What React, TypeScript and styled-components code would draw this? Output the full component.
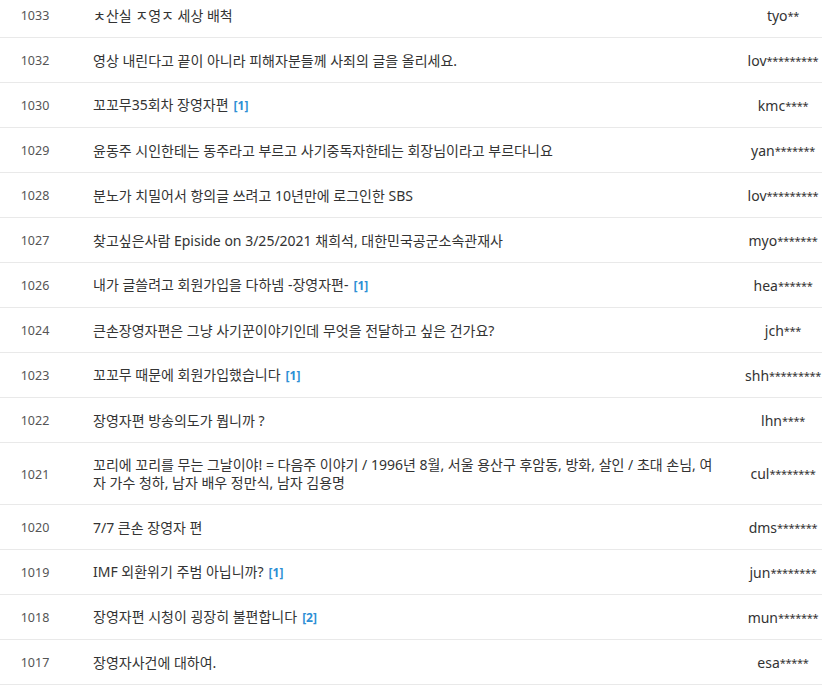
import React from "react";
import styled, { createGlobalStyle } from "styled-components";

// id: 앞 3글자, mask: 가려진 글자 수
const posts = [
  { no: 1033, title: "ㅊ산실 ㅈ영ㅈ 세상 배척", comments: 0, id: "tyo", mask: 2 },
  { no: 1032, title: "영상 내린다고 끝이 아니라 피해자분들께 사죄의 글을 올리세요.", comments: 0, id: "lov", mask: 9 },
  { no: 1030, title: "꼬꼬무35회차 장영자편", comments: 1, id: "kmc", mask: 4 },
  { no: 1029, title: "윤동주 시인한테는 동주라고 부르고 사기중독자한테는 회장님이라고 부르다니요", comments: 0, id: "yan", mask: 7 },
  { no: 1028, title: "분노가 치밀어서 항의글 쓰려고 10년만에 로그인한 SBS", comments: 0, id: "lov", mask: 9 },
  { no: 1027, title: "찾고싶은사람 Episide on 3/25/2021 채희석, 대한민국공군소속관재사", comments: 0, id: "myo", mask: 7 },
  { no: 1026, title: "내가 글쓸려고 회원가입을 다하넴 -장영자편-", comments: 1, id: "hea", mask: 6 },
  { no: 1024, title: "큰손장영자편은 그냥 사기꾼이야기인데 무엇을 전달하고 싶은 건가요?", comments: 0, id: "jch", mask: 3 },
  { no: 1023, title: "꼬꼬무 때문에 회원가입했습니다", comments: 1, id: "shh", mask: 9 },
  { no: 1022, title: "장영자편 방송의도가 뭡니까 ?", comments: 0, id: "lhn", mask: 4 },
  {
    no: 1021,
    title:
      "꼬리에 꼬리를 무는 그날이야! = 다음주 이야기 / 1996년 8월, 서울 용산구 후암동, 방화, 살인 / 초대 손님, 여자 가수 청하, 남자 배우 정만식, 남자 김용명",
    comments: 0,
    id: "cul",
    mask: 8,
  },
  { no: 1020, title: "7/7 큰손 장영자 편", comments: 0, id: "dms", mask: 7 },
  { no: 1019, title: "IMF 외환위기 주범 아닙니까?", comments: 1, id: "jun", mask: 8 },
  { no: 1018, title: "장영자편 시청이 굉장히 불편합니다", comments: 2, id: "mun", mask: 7 },
  { no: 1017, title: "장영자사건에 대하여.", comments: 0, id: "esa", mask: 5 },
];

const Global = createGlobalStyle`
  html, body {
    margin: 0;
    padding: 0;
    background: #ffffff;
    overflow: hidden;
  }
  body {
    font-family: "Noto Sans", "Noto Sans CJK KR", sans-serif;
  }
`;

const Board = () => {
  return (
    <List>
      {posts.map((p) => (
        <Row key={p.no}>
          <NoCell>{p.no}</NoCell>
          <TitleCell>
            {p.title}
            {p.comments > 0 && <Comment>[{p.comments}]</Comment>}
          </TitleCell>
          <AuthorCell>
            {p.id}
            <Mask>{"*".repeat(p.mask)}</Mask>
          </AuthorCell>
        </Row>
      ))}
    </List>
  );
};

export default function App() {
  return (
    <>
      <Global />
      <Board />
    </>
  );
}

const List = styled.ul`
  width: 843px;
  margin: -7px 0 0;
  padding: 0;
  list-style: none;
`;

const Row = styled.li`
  box-sizing: border-box;
  display: grid;
  grid-template-columns: 70px 653px 120px;
  align-items: center;
  min-height: 45px;
  border-bottom: 1px solid #e9e9e9;
`;

const NoCell = styled.div`
  text-align: center;
  font-size: 12.5px;
  line-height: 18px;
  color: #555;
  padding-top: 2px;
`;

const TitleCell = styled.div`
  padding: 13px 6px 12px 23px;
  font-size: 14px;
  line-height: 18px;
  color: #333;
`;

const Comment = styled.span`
  margin-left: 5px;
  font-size: 12px;
  font-weight: bold;
  color: #2d8fd5;
`;

const AuthorCell = styled.div`
  text-align: center;
  font-size: 14px;
  line-height: 18px;
  color: #333;
  white-space: nowrap;
  padding-top: 2px;
`;

const Mask = styled.span`
  font-size: 11px;
  letter-spacing: -0.3px;
  position: relative;
  top: -1px;
`;
